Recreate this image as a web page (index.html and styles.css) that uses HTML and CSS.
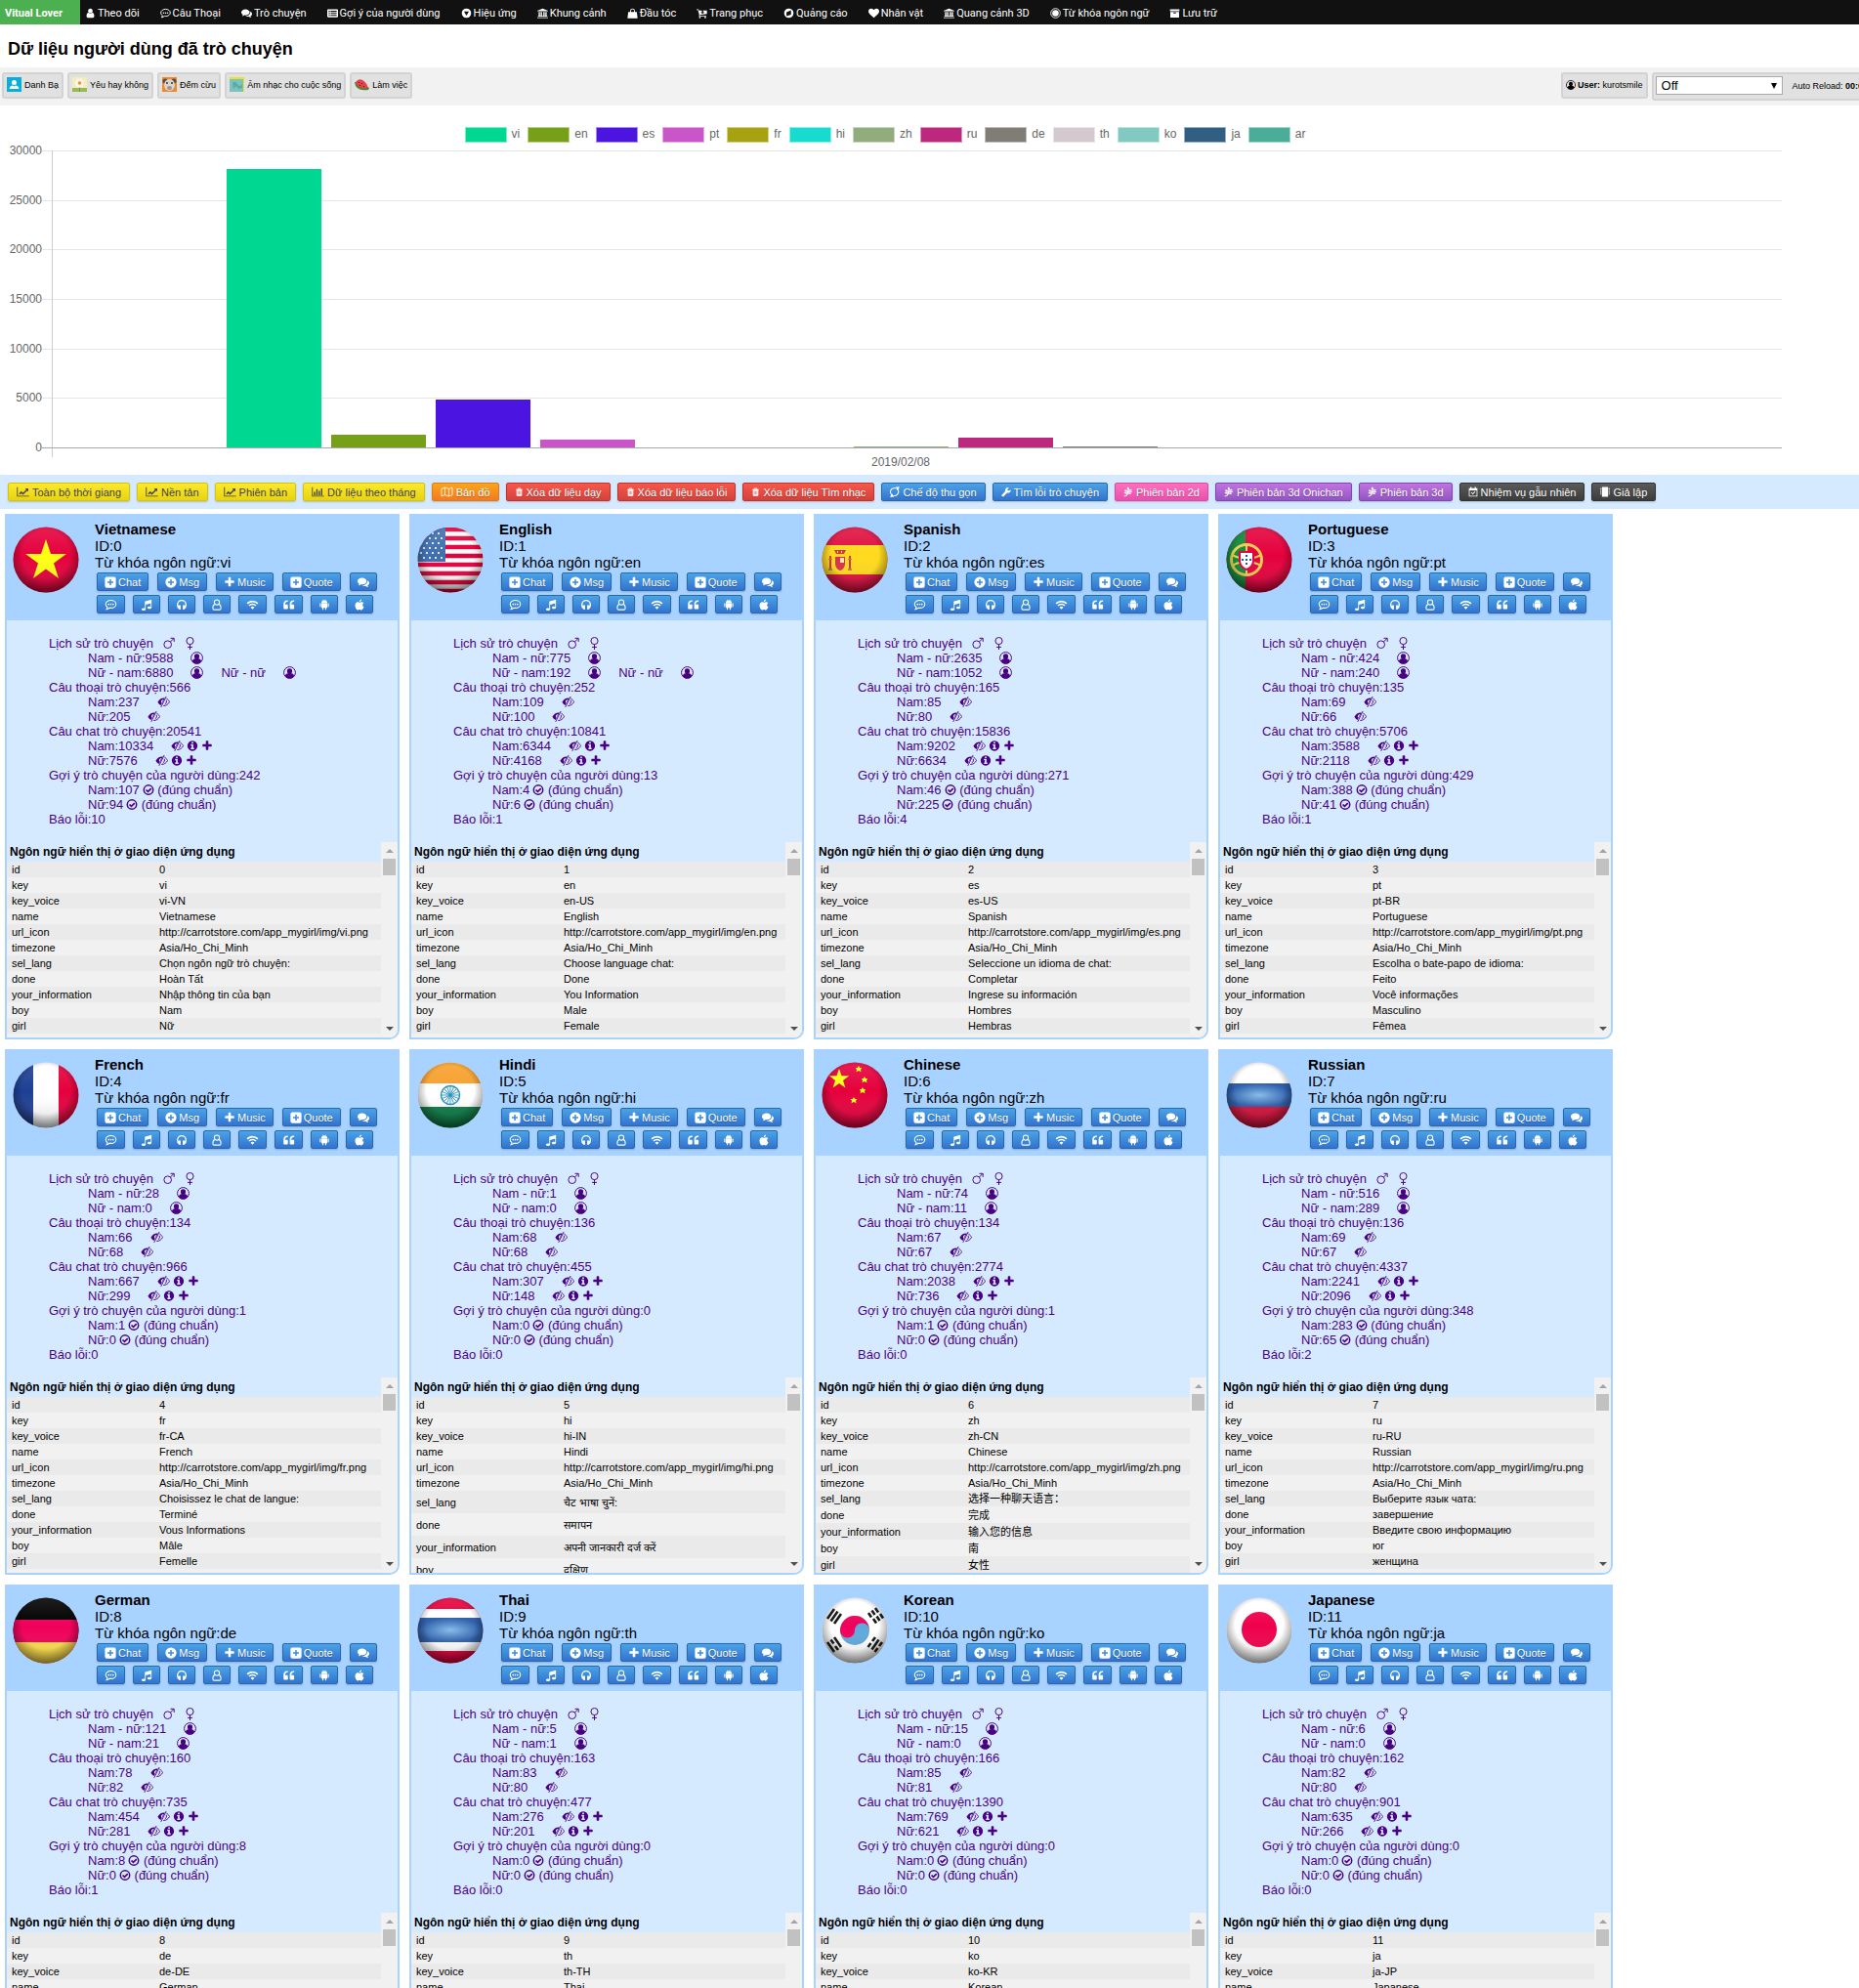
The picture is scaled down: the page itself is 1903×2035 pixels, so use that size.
FILE: index.html
```html
<!DOCTYPE html>
<html lang="vi">
<head>
<meta charset="utf-8">
<meta name="viewport" content="width=device-width, initial-scale=1">
<title>Vitual Lover</title>
<link rel="stylesheet" href="styles.css">
</head>
<body>
<svg class="sprite" aria-hidden="true">
  <defs>
    <radialGradient id="gloss" cx="50%" cy="42%" r="60%">
      <stop offset="0.6" stop-color="#000" stop-opacity="0"/>
      <stop offset="1" stop-color="#000" stop-opacity="0.5"/>
    </radialGradient>
    <linearGradient id="shine" x1="0" y1="0" x2="0" y2="1">
      <stop offset="0" stop-color="#fff" stop-opacity="0.12"/>
      <stop offset="0.45" stop-color="#fff" stop-opacity="0"/>
      <stop offset="1" stop-color="#000" stop-opacity="0.2"/>
    </linearGradient>
    <radialGradient id="sky">
      <stop offset="0" stop-color="#86bdea"/>
      <stop offset="1" stop-color="#2a5ba8"/>
    </radialGradient>
    <clipPath id="disc"><circle cx="34" cy="34" r="33.500"/></clipPath>
  </defs>
  <symbol id="i-user" viewBox="0 0 1792 1792"><path d="M1536 1399q0 109-62.500 187t-150.500 78h-854q-88 0-150.500-78t-62.500-187q0-85 8.500-160.500t31.500-152 58.500-131 94-89 134.500-34.500q131 128 313 128t313-128q76 0 134.500 34.500t94 89 58.500 131 31.500 152 8.500 160.500zm-256-887q0 159-112.500 271.500t-271.500 112.500-271.500-112.500-112.500-271.500 112.500-271.500 271.500-112.500 271.500 112.500 112.500 271.500z"/></symbol>
  <symbol id="i-heart" viewBox="0 0 1792 1792"><path d="M896 1664q-26 0-44-18l-624-602q-10-8-27.500-26t-55.500-65.500-68-97.500-53.500-121-23.500-138q0-220 127-344t351-124q62 0 126.500 21.500t120 58 95.500 68.500 76 68q36-36 76-68t95.500-68.500 120-58 126.500-21.500q224 0 351 124t127 344q0 221-229 450l-623 600q-18 18-44 18z"/></symbol>
  <symbol id="i-plus" viewBox="0 0 1792 1792"><path d="M1600 736v192q0 40-28 68t-68 28h-416v416q0 40-28 68t-68 28h-192q-40 0-68-28t-28-68v-416h-416q-40 0-68-28t-28-68v-192q0-40 28-68t68-28h416v-416q0-40 28-68t68-28h192q40 0 68 28t28 68v416h416q40 0 68 28t28 68z"/></symbol>
  <symbol id="i-music" viewBox="0 0 1792 1792"><path d="M1664 224v1120q0 50-34 89t-86 60.500-103.500 32-96.500 10.500-96.500-10.500-103.500-32-86-60.500-34-89 34-89 86-60.500 103.500-32 96.500-10.500q105 0 192 39v-537l-768 237v709q0 50-34 89t-86 60.500-103.500 32-96.500 10.500-96.500-10.500-103.500-32-86-60.500-34-89 34-89 86-60.500 103.500-32 96.500-10.500q105 0 192 39v-967q0-31 19-56.500t49-35.500l832-256q12-4 28-4 40 0 68 28t28 68z"/></symbol>
  <symbol id="i-info" viewBox="0 0 1792 1792"><path d="M1152 1376v-160q0-14-9-23t-23-9h-96v-512q0-14-9-23t-23-9h-320q-14 0-23 9t-9 23v160q0 14 9 23t23 9h96v320h-96q-14 0-23 9t-9 23v160q0 14 9 23t23 9h448q14 0 23-9t9-23zm-128-896v-160q0-14-9-23t-23-9h-192q-14 0-23 9t-9 23v160q0 14 9 23t23 9h192q14 0 23-9t9-23zm640 416q0 209-103 385.500t-279.500 279.500-385.500 103-385.500-103-279.500-279.500-103-385.500 103-385.500 279.500-279.500 385.500-103 385.500 103 279.500 279.500 103 385.500z"/></symbol>
  <symbol id="i-commenting" viewBox="0 0 16 16"><path d="M8 2c3.900 0 7 2.400 7 5.300s-3.100 5.200-7 5.200c-.6 0-1.200 0-1.700-.2-1.200 1.100-2.700 1.900-4.300 2 .7-.8 1.200-1.700 1.300-2.900C2 10.500 1 9.100 1 7.300 1 4.400 4.100 2 8 2z" fill="none" stroke="currentColor" stroke-width="1.400"/><circle cx="5" cy="7.500" r="1.100"/><circle cx="8" cy="7.500" r="1.100"/><circle cx="11" cy="7.500" r="1.100"/></symbol>
  <symbol id="i-comments" viewBox="0 0 16 16"><path d="M6.200 2C9.600 2 12.400 4 12.400 6.600s-2.800 4.500-6.200 4.500c-.5 0-1 0-1.500-.1-1 .8-2.300 1.200-3.500 1.300.6-.6 1-1.300 1.200-2.100C.9 9.400 0 8.100 0 6.600 0 4 2.800 2 6.200 2z"/><path d="M13.400 5.600c1.600.7 2.600 2 2.600 3.400 0 1.500-.9 2.700-2.400 3.500.2.800.6 1.400 1.200 2-1.300 0-2.500-.5-3.500-1.300-1.700.2-3.600-.1-4.900-1 3.800 0 7.400-2.300 7-6.600z"/></symbol>
  <symbol id="i-list" viewBox="0 0 16 16"><path fill-rule="evenodd" d="M1.300 2h13.400c.7 0 1.300.6 1.300 1.300v9.400c0 .7-.6 1.300-1.300 1.300H1.300C.6 14 0 13.400 0 12.700V3.300C0 2.600.6 2 1.300 2zM2 4.500V6h2V4.500zm3 0V6h9V4.500zM2 7.500V9h2V7.500zm3 0V9h9V7.500zM2 10.500V12h2v-1.500zm3 0V12h9v-1.500z"/></symbol>
  <symbol id="i-down" viewBox="0 0 16 16"><path fill-rule="evenodd" d="M8 1a7 7 0 110 14A7 7 0 018 1zM4.300 5.500L8 11.500l3.700-6z"/></symbol>
  <symbol id="i-bank" viewBox="0 0 16 16"><path d="M8 1l8 3.200v1H0v-1zM2 6h2v6h1V6h2v6h2V6h2v6h1V6h2v6h1v1H1v-1h1zM0 14h16v1.300H0z"/></symbol>
  <symbol id="i-bag" viewBox="0 0 16 16"><path d="M1.600 6h12.800l1.100 9.500H.5zM4.500 8V4.500a3.500 3.500 0 017 0V8h-1.200V4.500a2.300 2.300 0 00-4.600 0V8z"/></symbol>
  <symbol id="i-cart" viewBox="0 0 16 16"><path d="M0 2h3l.5 2H8v2.500H6L9 9l3-2.500h-2V4h5.500v5L5 10.500V11.500h9.500V12.700H3.500L4 10 2.200 3.300H0z"/><circle cx="5" cy="14.300" r="1.300"/><circle cx="13" cy="14.300" r="1.300"/></symbol>
  <symbol id="i-compass" viewBox="0 0 16 16"><path fill-rule="evenodd" d="M8 1a7 7 0 110 14A7 7 0 018 1zM4.500 12.200l6.800-2.200V3.800L4.500 6.500z"/></symbol>
  <symbol id="i-dot" viewBox="0 0 16 16"><circle cx="8" cy="8" r="7" fill="none" stroke="currentColor" stroke-width="1.300"/><circle cx="8" cy="8" r="4.800"/></symbol>
  <symbol id="i-archive" viewBox="0 0 16 16"><path fill-rule="evenodd" d="M1 2h14v3H1zM1.500 6h13v8.500h-13zM6.200 7v1.400h3.600V7z"/></symbol>
  <symbol id="i-ucircle" viewBox="0 0 16 16"><circle cx="8" cy="8" r="7.300" fill="none" stroke="currentColor" stroke-width="1.200"/><path d="M8 2.800a3.200 3.200 0 013.200 3.300c0 1.300-.6 2.300-1.200 2.900 1.900.2 3.400 1.400 3.700 3.500A7 7 0 018 15.300a7 7 0 01-5.700-2.800c.3-2.100 1.800-3.300 3.700-3.500-.6-.6-1.200-1.600-1.200-2.900A3.200 3.200 0 018 2.800z"/></symbol>
  <symbol id="i-line" viewBox="0 0 18 16"><path d="M0 1h1.300v12.700H18V15H0zM3 10.500L6.500 7 9 9.500l4.800-4.800L12.300 3H17v4.800l-1.600-1.500L9 12.500 6.500 10l-2 2z"/></symbol>
  <symbol id="i-bar" viewBox="0 0 18 16"><path d="M0 1h1.300v12.700H18V15H0zM3 8h2v5H3zM6.500 4h2v9h-2zM10 6.500h2V13h-2zM13.500 3h2v10h-2z"/></symbol>
  <symbol id="i-map" viewBox="0 0 18 16"><path d="M1 3.500l5-2 6 2 5-2v11l-5 2-6-2-5 2zM6 1.500v11M12 3.500v11" fill="none" stroke="currentColor" stroke-width="1.200"/></symbol>
  <symbol id="i-trash" viewBox="0 0 16 16"><path fill-rule="evenodd" d="M5.500 1h5l.8 2H14v1.300h-1V14c0 .8-.6 1.500-1.300 1.500H4.300C3.600 15.500 3 14.800 3 14V4.300H2V3h2.700zm.9 1l-.4 1h4l-.4-1zM5 6v7h1V6zm2.500 0v7h1V6zM10 6v7h1V6z"/></symbol>
  <symbol id="i-refresh" viewBox="0 0 16 16"><path d="M4 13.500A6.300 6.300 0 0110.500 2.600M12 3.500A6.300 6.300 0 015.500 13.900" fill="none" stroke="currentColor" stroke-width="1.800"/><path d="M9.500 0H16l-3.500 5.500zM6.500 16.300H0l3.500-5.500z"/></symbol>
  <symbol id="i-wrench" viewBox="0 0 16 16"><path d="M15.500 4.800a4.500 4.500 0 01-6 4.700L4 15a1.800 1.800 0 01-2.700 0 1.800 1.800 0 010-2.700l5.400-5.500A4.500 4.500 0 0112.500 1l-2.300 2 .3 2.500 2.500.3z"/></symbol>
  <symbol id="i-leaf" viewBox="0 0 16 16"><path d="M7 0c2.500 1 3 3 1.800 5 2-2 4.200-1.800 5.700-.6-1.500 1.800-3.500 2-5.500 1.300l-.4 1.500c2-1.500 4.500-1.200 6.400.6-1.800 1.600-4.700 1.700-6.700.4L8 9.800c1.800-.8 4-.3 5.200 1.400-1.800 1.200-4.200.8-5.500-.4C7 13.500 4.500 15.500 1 15.800v-1.500c2.300-.2 4-1.400 4.800-3.300-1.900.6-4 0-5-1.700 1.700-1.200 4-1 5.400.2L6.600 8C4.600 8.200 2 7.300 1.400 5 3.500 4.300 5.800 5 6.900 6.700L7.400 5C5.600 3.800 5.600 1.700 7 0z"/></symbol>
  <symbol id="i-cal" viewBox="0 0 16 16"><path fill-rule="evenodd" d="M3.500 0h2v2h5V0h2v2H15v13.500H1V2h2.500zM2.300 5.500v8.700h11.400V5.500zM4.500 9.200l1-1 2 2 3.300-3.300 1 1-4.300 4.300z"/></symbol>
  <symbol id="i-chip" viewBox="0 0 16 16"><path d="M3 0h10v16H3zM0 2h2v1.500H0zM0 5h2v1.500H0zM0 8h2v1.500H0zM0 11h2v1.500H0zM14 2h2v1.500h-2zM14 5h2v1.500h-2zM14 8h2v1.500h-2zM14 11h2v1.500h-2z"/></symbol>
  <symbol id="i-plussq" viewBox="0 0 16 16"><path fill-rule="evenodd" d="M3 .5h10A2.500 2.500 0 0115.500 3v10a2.500 2.500 0 01-2.500 2.500H3A2.500 2.500 0 01.5 13V3A2.500 2.500 0 013 .5zM7 4v3H4v2h3v3h2V9h3V7H9V4z"/></symbol>
  <symbol id="i-plusc" viewBox="0 0 16 16"><path fill-rule="evenodd" d="M8 .5a7.500 7.500 0 110 15 7.500 7.500 0 010-15zM7 4v3H4v2h3v3h2V9h3V7H9V4z"/></symbol>
  <symbol id="i-phones" viewBox="0 0 16 16"><path d="M2.200 10V8a5.800 5.800 0 0111.600 0v2" fill="none" stroke="currentColor" stroke-width="1.800"/><path d="M4 8.500h2.500v6H5L2 12V9.500zM12 8.500H9.500v6H11l3-2.500V9.500z"/></symbol>
  <symbol id="i-usero" viewBox="0 0 16 16"><circle cx="8" cy="4.700" r="3.500" fill="none" stroke="currentColor" stroke-width="1.400"/><path d="M5 7.500c-1.800.5-2.500 2.500-2.500 5 0 1.200.8 2.300 1.800 2.300h7.400c1 0 1.800-1.100 1.800-2.300 0-2.500-.7-4.500-2.500-5" fill="none" stroke="currentColor" stroke-width="1.400"/></symbol>
  <symbol id="i-wifi" viewBox="0 0 18 16"><path d="M1.500 6.500a10.500 10.500 0 0115 0M4.200 9.300a6.700 6.700 0 019.600 0" fill="none" stroke="currentColor" stroke-width="2.200"/><path d="M9 14.500l-2.700-2.800a3.800 3.800 0 015.400 0z"/></symbol>
  <symbol id="i-quote" viewBox="0 0 16 16"><path d="M7 9v3.500c0 .8-.6 1.500-1.500 1.500h-3C1.600 14 1 13.300 1 12.500V7c0-2.800 2-5 5-5h1v2H6C4.500 4 3.200 5.300 3.200 7v.5h2.300C6.400 7.500 7 8.200 7 9zM15.500 9v3.500c0 .8-.6 1.500-1.500 1.500h-3c-.9 0-1.500-.7-1.500-1.500V7c0-2.800 2-5 5-5h1v2h-1c-1.500 0-2.800 1.300-2.800 3v.5H14c.9 0 1.500.7 1.500 1.500z"/></symbol>
  <symbol id="i-android" viewBox="0 0 16 16"><path d="M4 5.500h8c0-1.700-.8-2.800-2-3.400l.7-1.300-.4-.2-.8 1.300a4.600 4.600 0 00-3 0L5.700.6l-.4.2L6 2.100c-1.200.6-2 1.700-2 3.400zM4 6h8v6.300H10.700V15H9.200v-2.700H6.800V15H5.300v-2.700H4zM1.800 6h1.500v5H1.800zM12.700 6h1.500v5h-1.500z"/></symbol>
  <symbol id="i-apple" viewBox="0 0 16 16"><path d="M14 11c-.8 2.400-2.200 4.300-3.600 4.300-.9 0-1.300-.6-2.400-.6s-1.500.6-2.400.6C3.800 15.300 2 12 2 9c0-2.900 1.800-4.600 3.700-4.600 1.100 0 1.900.7 2.600.7.700 0 1.500-.8 2.900-.8.900 0 1.900.5 2.500 1.400-2.200 1.300-1.900 4.400.3 5.300zM10.700.5c.1 1.700-1.200 3.500-2.900 3.500-.1-1.700 1.200-3.300 2.900-3.500z"/></symbol>
  <symbol id="i-mars" viewBox="0 0 16 16"><circle cx="7" cy="9.500" r="4.700" fill="none" stroke="currentColor" stroke-width="1.200"/><path d="M10.300 6.200L14.500 2M10.500 1.600H15V6" fill="none" stroke="currentColor" stroke-width="1.200"/></symbol>
  <symbol id="i-venus" viewBox="0 0 16 16"><circle cx="8" cy="5" r="4.400" fill="none" stroke="currentColor" stroke-width="1.200"/><path d="M8 9.400V16M5 12.800h6" fill="none" stroke="currentColor" stroke-width="1.200"/></symbol>
  <symbol id="i-eye" viewBox="0 0 16 16"><path fill-rule="evenodd" d="M9.700 3.100C5.800 2.500 2.600 4.500.5 8.200c1 1.800 2.300 3.200 4 4.100zM7.800 4.800C6 5 4.800 6.200 4.800 8c0 .6.200 1.200.5 1.700z"/><path fill="none" stroke="currentColor" stroke-width="1.100" d="M11.200 1.200L4.600 14.600M11.500 3.700c1.600.8 2.900 2.300 3.900 4.400-1.700 3.100-4.300 4.800-7.700 4.900M11.300 5.800c.8 2.200.1 4.200-1.800 5.300"/></symbol>
  <symbol id="i-check" viewBox="0 0 16 16"><circle cx="8" cy="8" r="6.300" fill="none" stroke="currentColor" stroke-width="2"/><path d="M4.700 8l2.600 2.600 4.400-4.400" fill="none" stroke="currentColor" stroke-width="2.200"/></symbol>

  <symbol id="f-vi" viewBox="0 0 68 68"><path fill="#e5003c" d="M0 0h68v68H0z"/><path fill="#ffff14" d="M34 13l5 15h16L42 37.500l5 15.500-13-9.500L21 53l5-15.500L13 28h16z"/></symbol>
  <symbol id="f-en" viewBox="0 0 68 68"><path fill="#fff" d="M0 0h68v68H0z"/><path stroke="#e5003c" stroke-width="4.500" d="M0 3h68M0 12h68M0 21h68M0 30h68M0 39h68M0 48h68M0 57h68M0 66h68"/><path fill="#3f6fb0" d="M0 0h29v36H0z"/><path stroke="#fff" stroke-width="2.200" stroke-linecap="round" stroke-dasharray="0 6" d="M4 7h24M7 12h21M4 17h24M7 22h21M4 27h24M7 32h21"/></symbol>
  <symbol id="f-es" viewBox="0 0 68 68"><path fill="#e01040" d="M0 0h68v68H0z"/><path fill="#ffd91c" d="M0 19h68v30H0z"/><path fill="#d8304a" d="M14 31h10v8q-1 5-5 6-4-1-5-6zM8 30h2v14H8zM28 30h2v14h-2zM13 24h12l-2 4h-8z"/><path fill="#f3e3b0" d="M19 32h4v5h-4zM16 25h1v2h-1zM20 25h1v2h-1z"/><path fill="#a98a3a" d="M7 43h4v2H7zM27 43h4v2h-4zM7 33h4v1H7zM27 33h4v1h-4z"/></symbol>
  <symbol id="f-pt" viewBox="0 0 68 68"><path fill="#e5003c" d="M0 0h68v68H0z"/><path fill="#118a3a" d="M0 0h20v68H0z"/><circle cx="21" cy="34" r="15.500" fill="none" stroke="#e8cf50" stroke-width="3"/><path d="M6 29q15 8 30 0M6 40q15-8 30 0M21 19v30" fill="none" stroke="#e8cf50" stroke-width="2"/><path fill="#fff" stroke="#e5003c" stroke-width="2" d="M14 26h14v10q-1 6-7 8-6-2-7-8z"/><path fill="#2a4fa0" d="M20 29h2v2h-2zM20 33h2v2h-2zM20 37h2v2h-2zM16 33h2v2h-2zM24 33h2v2h-2z"/></symbol>
  <symbol id="f-fr" viewBox="0 0 68 68"><path fill="#fff" d="M0 0h68v68H0z"/><path fill="#1d3f94" d="M0 0h21v68H0z"/><path fill="#e5003c" d="M47 0h21v68H47z"/></symbol>
  <symbol id="f-hi" viewBox="0 0 68 68"><path fill="#fff" d="M0 0h68v68H0z"/><path fill="#f7a02c" d="M0 0h68v22H0z"/><path fill="#0b7a45" d="M0 46h68v22H0z"/><circle cx="34" cy="34" r="9.500" fill="none" stroke="#2390c0" stroke-width="1.500"/><path stroke="#2390c0" stroke-width="0.900" d="M34 25v18M25 34h18M27.600 27.600l12.800 12.800M40.400 27.600L27.600 40.400M30.500 25.700l7 16.600M37.500 25.700l-7 16.600M25.700 30.500l16.600 7M25.700 37.500l16.600-7"/></symbol>
  <symbol id="f-zh" viewBox="0 0 68 68"><path fill="#e5003c" d="M0 0h68v68H0z"/><path fill="#ffff14" d="M18 7l2.500 7.300h7.700L22 19l2.400 7.500L18 22l-6.400 4.500L14 19l-6.200-4.700h7.700zM38 4l1.200 2h2l-1.200 2 .5 2.200L38 9l-2.500 1.200L36 8l-1.200-2h2zM44 15l1.200 2h2l-1.200 2 .5 2.200L44 20l-2.500 1.200.5-2.200-1.200-2h2zM42 26l1.200 2h2l-1.200 2 .5 2.200L42 31l-2.500 1.200.5-2.200-1.200-2h2zM33 36l1.200 2h2l-1.200 2 .5 2.200L33 41l-2.500 1.200.5-2.200-1.200-2h2z"/></symbol>
  <symbol id="f-ru" viewBox="0 0 68 68"><path fill="#fff" d="M0 0h68v68H0z"/><path fill="url(#sky)" d="M0 22h68v24H0z"/><path fill="#d4103a" d="M0 46h68v22H0z"/></symbol>
  <symbol id="f-de" viewBox="0 0 68 68"><path fill="#000" d="M0 0h68v68H0z"/><path fill="#f0005a" d="M0 23h68v45H0z"/><path fill="#ffdf4a" d="M0 46h68v22H0z"/></symbol>
  <symbol id="f-th" viewBox="0 0 68 68"><path fill="#e5003c" d="M0 0h68v68H0z"/><path fill="#fff" d="M0 12h68v43H0z"/><path fill="url(#sky)" d="M0 21h68v25H0z"/></symbol>
  <symbol id="f-ko" viewBox="0 0 68 68"><path fill="#fff" d="M0 0h68v68H0z"/><circle cx="34" cy="34" r="15" fill="#5fa8dc"/><path fill="#f0005a" d="M19 34a15 15 0 0130 0c0-4-3-7.500-7.500-7.500S34 30 34 34s-3.500 7.500-7.500 7.500S19 38 19 34z"/><g stroke="#111" stroke-width="2.600"><path d="M6 22l7-10M9.500 24.500l7-10M13 27l7-10"/><path d="M48 16l3 4.500M53 22l3 4.500M51.500 13.500l3 4.500M56.500 19.500l3 4.500M55 11l3 4.500M60 17l3 4.500"/><path d="M6 46l7 10M9.500 43.500l3 4M14 50l3 4M13 41l7 10"/><path d="M62 46l-3 4M57.500 52l-3 4M58.500 43.500l-7 10M55 41l-3 4M50.500 47l-3 4"/></g></symbol>
  <symbol id="f-ja" viewBox="0 0 68 68"><path fill="#fff" d="M0 0h68v68H0z"/><circle cx="34" cy="33" r="18" fill="#f0004c"/></symbol>
</svg>

<nav class="nav">
  <a class="nav-home" href="#">Vitual Lover</a>
  <a href="#"><svg><use href="#i-user"/></svg>Theo dõi</a>
  <a href="#"><svg><use href="#i-commenting"/></svg>Câu Thoại</a>
  <a href="#"><svg><use href="#i-comments"/></svg>Trò chuyện</a>
  <a href="#"><svg><use href="#i-list"/></svg>Gợi ý của người dùng</a>
  <a href="#"><svg><use href="#i-down"/></svg>Hiệu ứng</a>
  <a href="#"><svg><use href="#i-bank"/></svg>Khung cảnh</a>
  <a href="#"><svg><use href="#i-bag"/></svg>Đầu tóc</a>
  <a href="#"><svg><use href="#i-cart"/></svg>Trang phục</a>
  <a href="#"><svg><use href="#i-compass"/></svg>Quảng cáo</a>
  <a href="#"><svg><use href="#i-heart"/></svg>Nhân vật</a>
  <a href="#"><svg><use href="#i-bank"/></svg>Quang cảnh 3D</a>
  <a href="#"><svg><use href="#i-dot"/></svg>Từ khóa ngôn ngữ</a>
  <a href="#"><svg><use href="#i-archive"/></svg>Lưu trữ</a>
</nav>

<h1 class="title">Dữ liệu người dùng đã trò chuyện</h1>

<div class="tools">
  <a class="tool" href="#"><svg viewBox="0 0 15 15"><path fill="#08aede" d="M0 0h15v15H0z"/><circle cx="7.500" cy="5.500" r="2.500" fill="#fff"/><path fill="#fff" d="M2.500 12c.5-2.500 2-3.500 3.500-3.500l1.500 1 1.500-1c1.500 0 3 1 3.500 3.500z"/></svg>Danh Bạ</a>
  <a class="tool" href="#"><svg viewBox="0 0 15 15"><path fill="#f4edb8" d="M0 0h15v15H0z"/><path fill="#9aba58" d="M0 11h15v4H0z"/><path stroke="#769d42" d="M7.500 8v7"/><circle cx="7.500" cy="6" r="4.500" fill="#fff3ee"/><circle cx="7.500" cy="6" r="1.800" fill="#e9962c"/></svg>Yêu hay không</a>
  <a class="tool" href="#"><svg viewBox="0 0 15 15"><path fill="#ee8a2c" d="M0 0h15v15H0z"/><circle cx="3" cy="4" r="2.500" fill="#5d4a42"/><circle cx="12" cy="4" r="2.500" fill="#5d4a42"/><ellipse cx="7.500" cy="8" rx="5.500" ry="6" fill="#d9d5d2"/><circle cx="5" cy="6" r="1" fill="#333"/><circle cx="10" cy="6" r="1" fill="#333"/><ellipse cx="7.500" cy="11" rx="2.500" ry="2" fill="#a58f88"/></svg>Đếm cừu</a>
  <a class="tool" href="#"><svg viewBox="0 0 15 15"><path fill="#e8e22c" d="M0 0h15v15H0z"/><path fill="#7cc3bd" d="M0 2h14v13H0z"/><path fill="#5fa9a8" d="M3 6q3-3 5 1t5 0v4l-4 1-2-3-3 3z"/></svg>Âm nhạc cho cuộc sống</a>
  <a class="tool" href="#"><svg viewBox="0 0 15 15"><path fill="#3d8b37" d="M0 5q1 10 14 8l1-2-12-6z"/><path fill="#e8404a" d="M1 5q3-4 7-2t6 8q-11 2-13-6z"/><path fill="#3b1a1a" d="M4 5h1v1H4zM7 6h1v1H7zM5 8h1v1H5zM9 9h1v1H9z"/></svg>Làm việc</a>
  <div class="tools-right">
    <a class="tool" href="#"><svg class="tiny"><use href="#i-ucircle"/></svg><b>User:</b>&nbsp;kurotsmile</a>
    <div class="tool reload">
      <div class="select"><select aria-label="Auto Reload"><option>Off</option></select></div>
      <span>Auto Reload: <b>00:00</b></span>
    </div>
  </div>
</div>

<section class="chart">
  <ul class="legend">
    <li><i class="c-vi"></i>vi</li><li><i class="c-en"></i>en</li><li><i class="c-es"></i>es</li><li><i class="c-pt"></i>pt</li><li><i class="c-fr"></i>fr</li><li><i class="c-hi"></i>hi</li><li><i class="c-zh"></i>zh</li><li><i class="c-ru"></i>ru</li><li><i class="c-de"></i>de</li><li><i class="c-th"></i>th</li><li><i class="c-ko"></i>ko</li><li><i class="c-ja"></i>ja</li><li><i class="c-ar"></i>ar</li>
  </ul>
  <svg class="plot" viewBox="0 0 1903 338" role="img" aria-label="2019/02/08">
    <path stroke="#e5e5e5" d="M43 6.500H1824M43 57.500H1824M43 107.500H1824M43 158.500H1824M43 209.500H1824M43 259.500H1824"/>
    <path stroke="#ccc" d="M53.500 6V320"/>
    <path fill="#00d891" d="M232 25h97v285h-97z"/>
    <path fill="#76a017" d="M339 297h97v13h-97z"/>
    <path fill="#4b14e0" d="M446 261h97v49h-97z"/>
    <path fill="#c955c9" d="M553 302h97v8h-97z"/>
    <path fill="#91ad7b" d="M874 309h97v1h-97z"/>
    <path fill="#bb287e" d="M981 300h97v10h-97z"/>
    <path fill="#807c76" d="M1088 309h97v1h-97z"/>
    <path stroke="#a8a8a8" d="M43 310.500H1824"/>
    <g class="ylab" text-anchor="end">
      <text x="43" y="10">30000</text><text x="43" y="61">25000</text><text x="43" y="111">20000</text><text x="43" y="162">15000</text><text x="43" y="213">10000</text><text x="43" y="263">5000</text><text x="43" y="314">0</text>
    </g>
    <text class="ylab" x="922" y="329" text-anchor="middle">2019/02/08</text>
  </svg>
</section>

<div class="actions">
  <button class="btn yellow"><svg class="wide"><use href="#i-line"/></svg>Toàn bộ thời giang</button>
  <button class="btn yellow"><svg class="wide"><use href="#i-line"/></svg>Nền tản</button>
  <button class="btn yellow"><svg class="wide"><use href="#i-line"/></svg>Phiên bản</button>
  <button class="btn yellow"><svg class="wide"><use href="#i-bar"/></svg>Dữ liệu theo tháng</button>
  <button class="btn orange"><svg class="wide"><use href="#i-map"/></svg>Bản đồ</button>
  <button class="btn red"><svg><use href="#i-trash"/></svg>Xóa dữ liệu dạy</button>
  <button class="btn red"><svg><use href="#i-trash"/></svg>Xóa dữ liệu báo lỗi</button>
  <button class="btn red"><svg><use href="#i-trash"/></svg>Xóa dữ liệu Tìm nhạc</button>
  <button class="btn blue"><svg><use href="#i-refresh"/></svg>Chế độ thu gọn</button>
  <button class="btn blue"><svg><use href="#i-wrench"/></svg>Tìm lỗi trò chuyện</button>
  <button class="btn pink"><svg><use href="#i-leaf"/></svg>Phiên bản 2d</button>
  <button class="btn purple"><svg><use href="#i-leaf"/></svg>Phiên bản 3d Onichan</button>
  <button class="btn purple"><svg><use href="#i-leaf"/></svg>Phiên bản 3d</button>
  <button class="btn dark"><svg><use href="#i-cal"/></svg>Nhiệm vụ gẫu nhiên</button>
  <button class="btn dark"><svg><use href="#i-chip"/></svg>Giả lập</button>
</div>

<main class="cards" id="cards"></main>
<script src="cards.js"></script>
</body>
</html>
```
FILE: styles.css
```css
* { box-sizing: border-box; }

body {
  margin: 0;
  height: 100vh;
  overflow: hidden;
  background: #fff;
  color: #000;
  font-family: "Liberation Sans", Arial, "Noto Sans CJK SC", sans-serif;
  font-size: 13px;
}

svg { fill: currentColor; }
a { color: inherit; text-decoration: none; }
ul { list-style: none; margin: 0; padding: 0; }
.sprite { position: absolute; width: 0; height: 0; }

/* top navigation */
.nav {
  display: flex;
  height: 25px;
  background: #111;
  color: #fff;
  font: 11px/25px Roboto, "Noto Sans", sans-serif;
  white-space: nowrap;
}
.nav a { display: flex; align-items: center; gap: 2px; padding: 1px 16px 0 5px; }
.nav svg { width: 11px; height: 11px; }
.nav .nav-home { width: 82px; background: #4caf50; font-weight: bold; }

.title { margin: 0; padding: 0 8px; height: 44px; font-size: 18px; line-height: 50px; }

/* grey toolbar */
.tools {
  display: flex;
  align-items: flex-start;
  gap: 4px;
  height: 39px;
  padding: 5px 0 0 2px;
  background: #f2f2f2;
  font-size: 9px;
  white-space: nowrap;
}
.tool {
  display: flex;
  align-items: center;
  flex: none;
  height: 27px;
  padding: 0 3px 2px;
  background: #e1e1e1;
  border: 2px solid #d3d3d3;
  border-radius: 3px;
}
.tool svg { width: 15px; height: 15px; margin-right: 3px; }
.tool .tiny { width: 10px; height: 10px; margin-right: 2px; }
.tools-right { display: flex; gap: 4px; width: 305px; margin-left: auto; overflow: hidden; }
.reload { height: 29px; gap: 10px; padding-left: 2px; }
.select { position: relative; }
.select select {
  appearance: none;
  display: block;
  width: 130px;
  height: 19px;
  padding: 0 5px;
  background: #fff;
  border: 1px solid #a9a9a9;
  border-radius: 0;
  font: 13px "Liberation Sans", Arial, sans-serif;
}
.select::after {
  content: "";
  position: absolute;
  right: 6px;
  top: 7px;
  border: 3px solid transparent;
  border-top: 6px solid #000;
  border-bottom: 0;
}

/* chart */
.chart { padding-top: 22px; height: 378px; color: #666; font-size: 12px; }
.legend { display: flex; justify-content: center; gap: 8px; height: 18px; padding-right: 91px; }
.legend li { display: flex; gap: 5px; line-height: 14px; }
.legend i { width: 43px; height: 16px; border: 1px solid rgba(255, 255, 255, .5); }
.plot { display: block; width: 100%; }
.ylab { font-size: 12px; fill: #666; }
.c-vi { background: #00d891; }
.c-en { background: #76a017; }
.c-es { background: #4b14e0; }
.c-pt { background: #c955c9; }
.c-fr { background: #a6a210; }
.c-hi { background: #16dcd0; }
.c-zh { background: #91ad7b; }
.c-ru { background: #bb287e; }
.c-de { background: #807c76; }
.c-th { background: #d4c9cf; }
.c-ko { background: #81c9c1; }
.c-ja { background: #305f83; }
.c-ar { background: #4aad98; }

/* buttons */
.actions { display: flex; gap: 7px; padding: 8px; height: 35px; background: #d6eaff; }
.btn {
  display: flex;
  align-items: center;
  flex: none;
  gap: 3px;
  height: 19px;
  padding: 0 8px;
  border: 1px solid;
  border-radius: 2px;
  color: #fff;
  font: 11px "Liberation Sans", Arial, sans-serif;
  white-space: nowrap;
  text-shadow: 0 1px 1px rgba(0, 0, 0, .3);
  box-shadow: 0 1px 2px rgba(0, 0, 0, .2);
}
.btn svg { width: 10px; height: 11px; }
.btn .wide { width: 13px; }
.red svg { width: 9px; }
.yellow { background: linear-gradient(#fbe92f, #e8d311); border-color: #d9c400; color: #444; text-shadow: none; }
.orange { background: linear-gradient(#faa51a, #f47a20); border-color: #e07b1a; }
.red { background: linear-gradient(#f8574a, #d2423c); border-color: #c9302c; }
.blue { background: linear-gradient(#4ba3e6, #3273cf); border-color: #2a68ac; }
.pink { background: linear-gradient(#fd70bd, #ea4fae); border-color: #e048a0; }
.purple { background: linear-gradient(#bf74e0, #9455c4); border-color: #8544b0; }
.dark { background: linear-gradient(#5a5a5a, #3c3c3c); border-color: #333; }

/* language cards */
.cards { display: grid; grid-template-columns: repeat(auto-fill, 404px); gap: 10px; padding: 5px; }
.card {
  height: 538px;
  overflow: hidden;
  display: flex;
  flex-direction: column;
  background: #d6eaff;
  border: 2px solid #a8d2ff;
  border-bottom-right-radius: 10px;
}
.head { display: flex; gap: 16px; height: 107px; padding: 5px 6px 0; background: #a8d2ff; font-size: 15px; line-height: 17px; }
.flag { width: 68px; height: 68px; margin-top: 6px; flex: none; }
.head h2 { margin: 0; font-size: 15px; line-height: 17px; }
.head p { margin: 0; }
.row { display: flex; gap: 9px; margin: 2px 0 4px 2px; }
.row + .row { gap: 8px; margin-top: 0; }
.row .btn { padding: 0 7px; gap: 2px; }
.row svg { width: 12px; height: 12px; }
.row .wide { width: 13px; }

.stats { height: 227px; padding: 16px 0 0 43px; color: #4b0082; line-height: 15px; }
.stats ul { padding-left: 40px; }
.stats li { white-space: nowrap; }
.stats svg { width: 13px; height: 13px; vertical-align: -2px; margin-left: 3px; }
.stats .far { margin-left: 18px; }
.stats .near { margin-left: 9px; }
.stats .tail { margin-left: 18px; }
.stats .mark { width: 12px; }

.lang { display: flex; flex: 1; min-height: 0; }
.lang-body { flex: 1; overflow: hidden; }
.lang h3 { margin: 0; padding-left: 3px; font-size: 12px; line-height: 20px; height: 20px; }
.lang table { width: 100%; border-collapse: collapse; table-layout: fixed; font-size: 11px; }
.lang td { height: 16px; padding: 0 0 0 5px; line-height: 16px; white-space: nowrap; background: #f1f1f1; }
.lang td:first-child { width: 151px; }
.lang tr:nth-child(odd) td { background: #eaeaea; }
.tall-hi tr:nth-child(n+7) td { height: 23px; }
.tall-zh tr:nth-child(n+8) td { height: 17px; }

.bar { display: flex; flex-direction: column; align-items: center; width: 17px; padding: 7px 0; background: #f1f1f1; }
.bar::before, .bar::after { content: ""; border: 4px solid transparent; }
.bar::before { border-top-width: 0; border-bottom-color: #a3a3a3; }
.bar::after { border-bottom-width: 0; border-top-color: #505050; margin-top: auto; }
.bar i { width: 13px; height: 17px; margin-top: 6px; background: #c1c1c1; }
```
FILE: cards.js
```js
// name, key, voice, stats, translated labels
const langs = [
  ['Vietnamese', 'vi', 'vi-VN', [9588, 6880, 566, 237, 205, 20541, 10334, 7576, 242, 107, 94, 10], ['Chọn ngôn ngữ trò chuyện:', 'Hoàn Tất', 'Nhập thông tin của bạn', 'Nam', 'Nữ']],
  ['English', 'en', 'en-US', [775, 192, 252, 109, 100, 10841, 6344, 4168, 13, 4, 6, 1], ['Choose language chat:', 'Done', 'You Information', 'Male', 'Female']],
  ['Spanish', 'es', 'es-US', [2635, 1052, 165, 85, 80, 15836, 9202, 6634, 271, 46, 225, 4], ['Seleccione un idioma de chat:', 'Completar', 'Ingrese su información', 'Hombres', 'Hembras']],
  ['Portuguese', 'pt', 'pt-BR', [424, 240, 135, 69, 66, 5706, 3588, 2118, 429, 388, 41, 1], ['Escolha o bate-papo de idioma:', 'Feito', 'Você informações', 'Masculino', 'Fêmea']],
  ['French', 'fr', 'fr-CA', [28, 0, 134, 66, 68, 966, 667, 299, 1, 1, 0, 0], ['Choisissez le chat de langue:', 'Terminé', 'Vous Informations', 'Mâle', 'Femelle']],
  ['Hindi', 'hi', 'hi-IN', [1, 0, 136, 68, 68, 455, 307, 148, 0, 0, 0, 0], ['चैट भाषा चुनें:', 'समापन', 'अपनी जानकारी दर्ज करें', 'दक्षिण']],
  ['Chinese', 'zh', 'zh-CN', [74, 11, 134, 67, 67, 2774, 2038, 736, 1, 1, 0, 0], ['选择一种聊天语言：', '完成', '输入您的信息', '南', '女性']],
  ['Russian', 'ru', 'ru-RU', [516, 289, 136, 69, 67, 4337, 2241, 2096, 348, 283, 65, 2], ['Выберите язык чата:', 'завершение', 'Введите свою информацию', 'юг', 'женщина']],
  ['German', 'de', 'de-DE', [121, 21, 160, 78, 82, 735, 454, 281, 8, 8, 0, 1], []],
  ['Thai', 'th', 'th-TH', [5, 1, 163, 83, 80, 477, 276, 201, 0, 0, 0, 0], []],
  ['Korean', 'ko', 'ko-KR', [15, 0, 166, 85, 81, 1390, 769, 621, 0, 0, 0, 0], []],
  ['Japanese', 'ja', 'ja-JP', [6, 0, 162, 82, 80, 901, 635, 266, 0, 0, 0, 0], []],
];

const icon = (id, cls = '') => `<svg class="${cls}"><use href="#i-${id}"/></svg>`;
const wide = ['commenting', 'wifi', 'quote'];
const button = (id, text = '') => `<button class="btn blue" aria-label="${text || id}">${icon(id, wide.includes(id) ? 'wide' : '')}${text}</button>`;
const labels = ['sel_lang', 'done', 'your_information', 'boy', 'girl'];

function card([name, key, voice, s, words], id) {
  const same = key === 'vi' || key === 'en';
  const rows = [['id', id], ['key', key], ['key_voice', voice], ['name', name],
    ['url_icon', `http://carrotstore.com/app_mygirl/img/${key}.png`], ['timezone', 'Asia/Ho_Chi_Minh'],
    ...words.map((w, i) => [labels[i], w]), ['', '']];
  return `<article class="card">
    <header class="head">
      <svg class="flag" viewBox="0 0 68 68"><g clip-path="url(#disc)"><use href="#f-${key}"/><circle cx="34" cy="34" r="34" fill="url(#shine)"/><circle cx="34" cy="34" r="34" fill="url(#gloss)"/></g></svg>
      <div>
        <h2>${name}</h2><p>ID:${id}</p><p>Từ khóa ngôn ngữ:${key}</p>
        <div class="row">${button('plussq', 'Chat')}${button('plusc', 'Msg')}${button('plus', 'Music')}${button('plussq', 'Quote')}${button('comments')}</div>
        <div class="row">${['commenting', 'music', 'phones', 'usero', 'wifi', 'quote', 'android', 'apple'].map(i => button(i)).join('')}</div>
      </div>
    </header>
    <ul class="stats">
      <li>Lịch sử trò chuyện${icon('mars', 'near')}${icon('venus', 'near')}</li>
      <li><ul><li>Nam - nữ:${s[0]}${icon('ucircle', 'far')}</li>
        <li>Nữ - nam:${s[1]}${icon('ucircle', 'far')}${same ? `<span class="tail">Nữ - nữ</span>${icon('ucircle', 'far')}` : ''}</li></ul></li>
      <li>Câu thoại trò chuyện:${s[2]}</li>
      <li><ul><li>Nam:${s[3]}${icon('eye', 'far')}</li><li>Nữ:${s[4]}${icon('eye', 'far')}</li></ul></li>
      <li>Câu chat trò chuyện:${s[5]}</li>
      <li><ul>${['Nam:' + s[6], 'Nữ:' + s[7]].map(t => `<li>${t}${icon('eye', 'far')}${icon('info', 'mark')}${icon('plus', 'mark')}</li>`).join('')}</ul></li>
      <li>Gợi ý trò chuyện của người dùng:${s[8]}</li>
      <li><ul>${['Nam:' + s[9], 'Nữ:' + s[10]].map(t => `<li>${t}${icon('check', 'mark')} (đúng chuẩn)</li>`).join('')}</ul></li>
      <li>Báo lỗi:${s[11]}</li>
    </ul>
    <section class="lang">
      <div class="lang-body">
        <h3>Ngôn ngữ hiển thị ở giao diện ứng dụng</h3>
        <table class="tall-${key}">${rows.map(([k, v]) => `<tr><td>${k}</td><td>${v}</td></tr>`).join('')}</table>
      </div>
      <div class="bar"><i></i></div>
    </section>
  </article>`;
}

document.getElementById('cards').innerHTML = langs.map(card).join('');
```
